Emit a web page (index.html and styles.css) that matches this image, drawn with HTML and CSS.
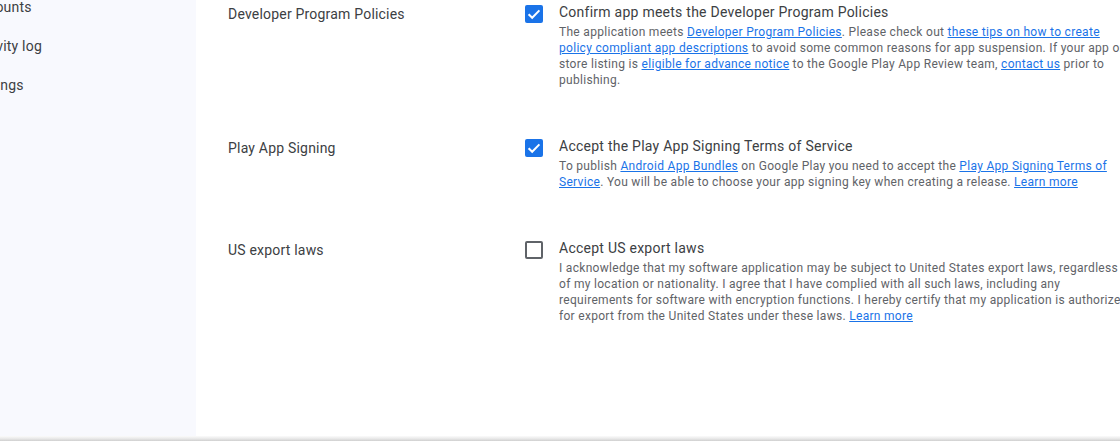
FILE: index.html
```html
<!DOCTYPE html>
<html>
<head>
<meta charset="utf-8">
<link rel="stylesheet" href="styles.css">
</head>
<body>
<div class="page">
  <div class="layout">
    <nav class="sidebar">
      <div class="nav-item">Accounts</div>
      <div class="nav-item">Activity log</div>
      <div class="nav-item">Settings</div>
    </nav>
    <main class="main">
      <section class="row">
        <div class="label">Developer Program Policies</div>
        <div class="check checked"><svg viewBox="0 0 18 18" width="18" height="18"><path d="M3.6 9.2l3.6 3.6 7.2-7.4" fill="none" stroke="#fff" stroke-width="2"/></svg></div>
        <div class="body">
          <div class="title">Confirm app meets the Developer Program Policies</div>
          <p class="desc">The application meets <a href="#">Developer Program Policies</a>. Please check out <a href="#">these tips on how to create policy compliant app descriptions</a> to avoid some common reasons for app suspension. If your app or store listing is <a href="#">eligible for advance notice</a> to the Google Play App Review team, <a href="#">contact us</a> prior to publishing.</p>
        </div>
      </section>
      <section class="row">
        <div class="label">Play App Signing</div>
        <div class="check checked"><svg viewBox="0 0 18 18" width="18" height="18"><path d="M3.6 9.2l3.6 3.6 7.2-7.4" fill="none" stroke="#fff" stroke-width="2"/></svg></div>
        <div class="body">
          <div class="title">Accept the Play App Signing Terms of Service</div>
          <p class="desc">To publish <a href="#">Android App Bundles</a> on Google Play you need to accept the <a href="#">Play App Signing Terms of Service</a>. You will be able to choose your app signing key when creating a release. <a href="#">Learn more</a></p>
        </div>
      </section>
      <section class="row">
        <div class="label">US export laws</div>
        <div class="check"></div>
        <div class="body">
          <div class="title">Accept US export laws</div>
          <p class="desc">I acknowledge that my software application may be subject to United States export laws, regardless of my location or nationality. I agree that I have complied with all such laws, including any requirements for software with encryption functions. I hereby certify that my application is authorized for export from the United States under these laws. <a href="#">Learn more</a></p>
        </div>
      </section>
    </main>
  </div>
  <div class="footer"></div>
</div>
</body>
</html>
```
FILE: styles.css
```css
html, body {
  margin: 0;
  padding: 0;
  height: 441px;
  overflow: hidden;
  background: #fff;
  font-family: Roboto, "Noto Sans", Arial, sans-serif;
}
.page {
  display: flex;
  flex-direction: column;
  height: 441px;
}
.layout {
  flex: 1;
  display: flex;
  min-height: 0;
}
.sidebar {
  width: 196px;
  flex: none;
  background: #f8f9fe;
  overflow: hidden;
  margin-top: -12px;
}
.nav-item {
  height: 39px;
  line-height: 39px;
  font-size: 14px;
  letter-spacing: 0.2px;
  color: #3c4043;
  margin-left: -29px;
  white-space: nowrap;
}
.main {
  flex: 1;
  padding-left: 32px;
  display: flex;
  flex-direction: column;
  gap: 46px;
  overflow: hidden;
}
.row {
  display: flex;
  align-items: flex-start;
}
.label {
  width: 297px;
  flex: none;
  font-size: 14px;
  letter-spacing: 0.2px;
  line-height: 20px;
  padding-top: 4px;
  color: #3c4043;
}
.check {
  width: 18px;
  height: 18px;
  flex: none;
  box-sizing: border-box;
  border: 2px solid #5f6368;
  border-radius: 2px;
  margin-top: 5px;
  margin-right: 16px;
}
.check.checked {
  border: none;
  background: #1a73e8;
}
.check svg { display: block; }
.body {
  width: 571px;
  flex: none;
}
.title {
  font-size: 14px;
  letter-spacing: 0.25px;
  line-height: 24px;
  color: #3c4043;
}
.desc {
  margin: 0;
  font-size: 12px;
  letter-spacing: 0.3px;
  line-height: 16px;
  color: #5f6368;
}
.desc a {
  color: #1a73e8;
  text-decoration: underline;
}
.footer {
  height: 5px;
  flex: none;
  background: linear-gradient(#fbfbfb, #e6e6e6 60%, #cfcfcf);
}
```
